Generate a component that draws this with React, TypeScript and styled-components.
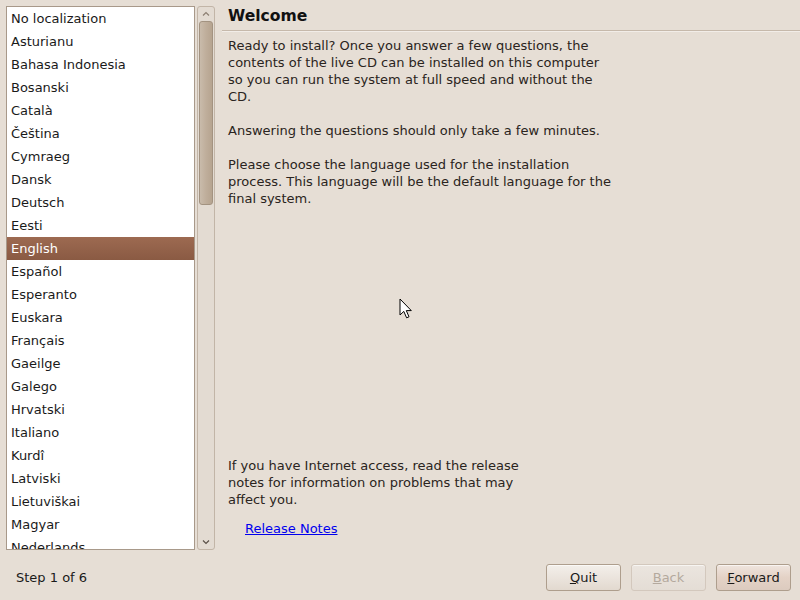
import React from "react";
import styled, { createGlobalStyle } from "styled-components";

const Global = createGlobalStyle`
  html, body { margin: 0; padding: 0; }
  body {
    width: 800px; height: 600px; overflow: hidden;
    background: #e6ded5;
    font-family: "DejaVu Sans", "Liberation Sans", sans-serif;
    font-size: 13px;
    color: #1a1a1a;
  }
`;

const Window = styled.div`
  position: relative;
  width: 800px;
  height: 600px;
  display: flex;
  flex-direction: column;
  background: #e6ded5;
`;

const Main = styled.div`
  display: flex;
  height: 549px;
  padding: 6px 0 0 6px;
  box-sizing: border-box;
`;

const ListBox = styled.div`
  width: 189px;
  height: 544px;
  box-sizing: border-box;
  border: 1px solid #a8998a;
  background: #ffffff;
  overflow: hidden;
`;

const Row = styled.div<{ $selected?: boolean }>`
  height: 23px;
  line-height: 23px;
  padding-left: 4px;
  white-space: nowrap;
  color: ${(p) => (p.$selected ? "#ffffff" : "#1a1a1a")};
  background: ${(p) =>
    p.$selected ? "linear-gradient(#9d6a51, #8a5a43)" : "transparent"};
`;

const Scrollbar = styled.div`
  margin-left: 2px;
  width: 18px;
  height: 544px;
  box-sizing: border-box;
  border: 1px solid #c2b5a7;
  border-radius: 3px;
  background: #e3dbd2;
  display: flex;
  flex-direction: column;
  align-items: center;
`;

const Arrow = styled.div`
  height: 14px;
  width: 16px;
  display: flex;
  align-items: center;
  justify-content: center;
  flex-shrink: 0;
`;

const Thumb = styled.div`
  width: 14px;
  height: 184px;
  box-sizing: border-box;
  border: 1px solid #a39381;
  border-radius: 3px;
  background: linear-gradient(90deg, #c9bbab, #bfae9b 50%, #b6a490);
`;

const Spacer = styled.div`
  flex: 1;
`;

const BottomGap = styled.div`
  height: 12px;
`;

const Content = styled.div`
  flex: 1;
  margin-left: 7px;
  display: flex;
  flex-direction: column;
`;

const Heading = styled.div`
  font-weight: bold;
  font-size: 15.6px;
  padding: 1px 0 5px 6px;
  line-height: 18px;
  color: #111;
`;

const Rule = styled.div`
  height: 1px;
  background: #c6b9ab;
  border-bottom: 1px solid #f2ede8;
  margin-bottom: 5px;
`;

const Para = styled.p<{ $width: number }>`
  margin: 0 0 17px 6px;
  width: ${(p) => p.$width}px;
  line-height: 17px;
  color: #2a2420;
`;

const Link = styled.a`
  margin-left: 23px;
  margin-top: -5px;
  color: #0000ee;
  text-decoration: underline;
  line-height: 17px;
  cursor: pointer;
`;

const Bottom = styled.div`
  flex: 1;
  display: flex;
  align-items: center;
  padding: 6px 9px 0 16px;
`;

const Step = styled.div`
  flex: 1;
  color: #1a1a1a;
`;

const Button = styled.button<{ $default?: boolean; $disabled?: boolean }>`
  width: 75px;
  height: 27px;
  margin-left: 10px;
  box-sizing: border-box;
  border-radius: 3px;
  font-family: inherit;
  font-size: 13px;
  padding: 0;
  border: 1px solid ${(p) => (p.$disabled ? "#d3c8bd" : "#ae9e8d")};
  color: ${(p) => (p.$disabled ? "#b4a99d" : "#1a1a1a")};
  background: ${(p) =>
    p.$disabled
      ? "linear-gradient(#ebe5df, #e4ddd5)"
      : p.$default
      ? "linear-gradient(#efe5de, #e4d2c6 50%, #dccbbf)"
      : "linear-gradient(#f3efea, #ebe4dd 50%, #e2d9cf)"};
  box-shadow: inset 0 1px 0 rgba(255, 255, 255, 0.6);
  u { text-decoration: underline; }
`;

const Cursor = styled.svg`
  position: absolute;
  left: 399px;
  top: 298px;
`;

const languages = [
  "No localization",
  "Asturianu",
  "Bahasa Indonesia",
  "Bosanski",
  "Català",
  "Čeština",
  "Cymraeg",
  "Dansk",
  "Deutsch",
  "Eesti",
  "English",
  "Español",
  "Esperanto",
  "Euskara",
  "Français",
  "Gaeilge",
  "Galego",
  "Hrvatski",
  "Italiano",
  "Kurdî",
  "Latviski",
  "Lietuviškai",
  "Magyar",
  "Nederlands",
];

export default function App() {
  return (
    <Window>
      <Global />
      <Main>
        <ListBox>
          {languages.map((l) => (
            <Row key={l} $selected={l === "English"}>
              {l}
            </Row>
          ))}
        </ListBox>
        <Scrollbar>
          <Arrow>
            <svg width="8" height="6" viewBox="0 0 8 6">
              <path d="M1 4.5 L4 1.5 L7 4.5" fill="none" stroke="#8c7f72" strokeWidth="1.2" />
            </svg>
          </Arrow>
          <Thumb />
          <Spacer />
          <Arrow>
            <svg width="8" height="6" viewBox="0 0 8 6">
              <path d="M1 1.5 L4 4.5 L7 1.5" fill="none" stroke="#5a5048" strokeWidth="1.2" />
            </svg>
          </Arrow>
        </Scrollbar>
        <Content>
          <Heading>Welcome</Heading>
          <Rule />
          <Para $width={385}>
            Ready to install? Once you answer a few questions, the contents of the live CD can be
            installed on this computer so you can run the system at full speed and without the CD.
          </Para>
          <Para $width={385}>Answering the questions should only take a few minutes.</Para>
          <Para $width={385}>
            Please choose the language used for the installation process. This language will be
            the default language for the final system.
          </Para>
          <Spacer />
          <Para $width={300}>
            If you have Internet access, read the release notes for information on problems that
            may affect you.
          </Para>
          <Link>Release Notes</Link>
          <BottomGap />
        </Content>
      </Main>
      <Bottom>
        <Step>Step 1 of 6</Step>
        <Button>
          <u>Q</u>uit
        </Button>
        <Button $disabled>
          <u>B</u>ack
        </Button>
        <Button $default>
          <u>F</u>orward
        </Button>
      </Bottom>
      <Cursor width="14" height="22" viewBox="0 0 14 22">
        <path
          d="M1 1 L1 17 L4.8 13.4 L7.6 19.8 L10 18.8 L7.3 12.6 L12.3 12.6 Z"
          fill="#ffffff"
          stroke="#000000"
          strokeWidth="1"
          strokeLinejoin="miter"
        />
      </Cursor>
    </Window>
  );
}
